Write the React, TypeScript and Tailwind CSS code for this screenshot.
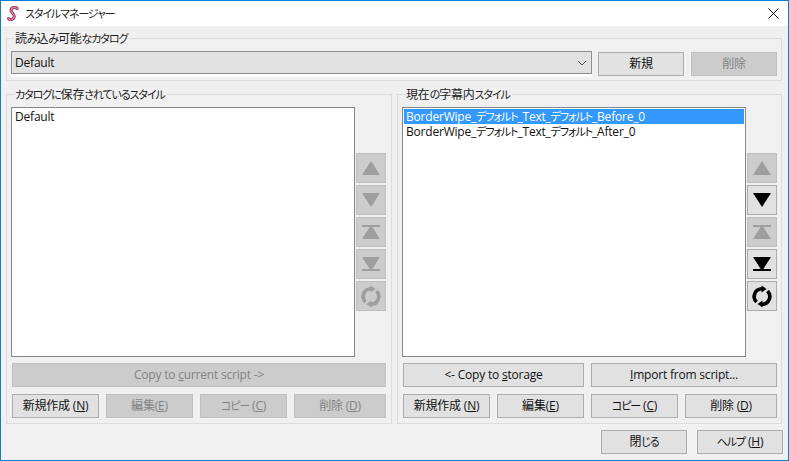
const font = "font-['Open_Sans','Noto_Sans_CJK_JP',sans-serif]";

function J({ t }: { t: string }) {
  const parts = t.split(/([\u3040-\u30ff]+)/);
  return (
    <>
      {parts.map((p, i) =>
        /[\u3040-\u30ff]/.test(p) ? (
          <span key={i} className="text-[11px] leading-none tracking-[-1.1px]">
            {p}
          </span>
        ) : (
          <span key={i}>{p}</span>
        ),
      )}
    </>
  );
}

function Btn({ children, off, w, h = 'h-[24px]' }: { children: React.ReactNode; off?: boolean; w: string; h?: string }) {
  return (
    <div
      className={`${w} ${h} shrink-0 flex items-center justify-center text-[12px] leading-none border ${
        off ? 'bg-[#cccccc] border-[#bfbfbf] text-[#838383]' : 'bg-[#e1e1e1] border-[#adadad] text-[#111111]'
      }`}
    >
      <span>{children}</span>
    </div>
  );
}

function Icon({ kind, off }: { kind: string; off?: boolean }) {
  const c = off ? '#9e9e9e' : '#000000';
  return (
    <div className={`w-[30px] h-[30px] border ${off ? 'bg-[#cccccc] border-[#bfbfbf]' : 'bg-[#e1e1e1] border-[#adadad]'}`}>
      <svg width="28" height="28" viewBox="1 1 28 28">
        {kind === 'up' && <path d="M15 8 L24 22 L6 22 Z" fill={c} />}
        {kind === 'down' && <path d="M6 8 L24 8 L15 22 Z" fill={c} />}
        {kind === 'top' && <path d="M6 8 H24 V10 H6 Z M15 8 L24 22 H6 Z" fill={c} />}
        {kind === 'bottom' && <path d="M6 8 H24 L15 22 Z M6 20 H24 V22 H6 Z" fill={c} />}
        {kind === 'sync' && (
          <g fill="none" stroke={c} strokeWidth="3.6">
            <path d="M9.5 21 A7.8 7.8 0 0 1 15 7.7" />
            <path d="M20.5 10 A7.8 7.8 0 0 1 15 23.3" />
            <path d="M14.5 4.5 L19.5 8 L14.5 11.5 Z" fill={c} stroke="none" />
            <path d="M15.5 19.5 L10.5 23 L15.5 26.5 Z" fill={c} stroke="none" />
          </g>
        )}
      </svg>
    </div>
  );
}

function Group({ title, className, children }: { title: string; className: string; children: React.ReactNode }) {
  return (
    <div className={`relative border border-[#dcdcdc] ${className}`}>
      <span className="absolute left-[8px] -top-[7px] bg-[#f0f0f0] pr-[2px] text-[12px] leading-[14px] text-[#222222]">
        <J t={title} />
      </span>
      {children}
    </div>
  );
}

function Arrows({ flags }: { flags: boolean[] }) {
  const kinds = ['up', 'down', 'top', 'bottom', 'sync'];
  return (
    <div className="mt-[46px] ml-px flex flex-col gap-[2px]">
      {kinds.map((k, i) => (
        <Icon key={k} kind={k} off={flags[i]} />
      ))}
    </div>
  );
}

export default function App() {
  return (
    <div className={`w-[789px] h-[461px] overflow-hidden border border-[#0a7fd6] bg-[#f0f0f0] ${font} [font-feature-settings:'palt'] tracking-[-0.2px] flex flex-col`}>
      <div className="h-[25px] shrink-0 bg-white flex items-center pl-[6px] pr-[9px]">
        <svg width="12" height="16" viewBox="6 6 12 16">
          <path d="M16 8.5 C14.5 6.5 10.5 7 10 10 C9.6 13 13.5 13.5 13.2 16.5 C13 19.5 9.5 20.5 7.5 18.5" fill="none" stroke="#8f2f55" strokeWidth="3" strokeLinecap="round" />
          <path d="M16 8.5 C14.5 6.5 10.5 7 10 10 C9.6 13 13.5 13.5 13.2 16.5 C13 19.5 9.5 20.5 7.5 18.5" fill="none" stroke="#ea7fa6" strokeWidth="1.3" strokeLinecap="round" />
        </svg>
        <span className="ml-[6px] text-[12px] text-[#222222]">
          <J t="スタイルマネージャー" />
        </span>
        <svg className="ml-auto" width="11" height="11" viewBox="0 0 11 11">
          <path d="M0.5 0.5 L10.5 10.5 M10.5 0.5 L0.5 10.5" stroke="#111111" strokeWidth="1" />
        </svg>
      </div>

      <div className="flex-1 px-[5px] pt-[12px]">
        <Group title="読み込み可能なカタログ" className="h-[43px] w-[776px] pl-[4px] pt-[12px]">
          <div className="flex">
            <div className="w-[581px] h-[26px] bg-white">
              <div className="h-[23px] border border-[#8f8f8f] bg-[#e1e1e1] flex items-center pl-[3px] pr-[4px] text-[12px] text-[#111111]">
                <span>Default</span>
                <svg className="ml-auto" width="10" height="6" viewBox="0 0 10 6">
                  <path d="M1 1 L5 5 L9 1" fill="none" stroke="#555555" strokeWidth="1" />
                </svg>
              </div>
            </div>
            <div className="ml-[6px] mt-px flex gap-[7px]">
              <Btn w="w-[86px]">新規</Btn>
              <Btn w="w-[86px]" off>削除</Btn>
            </div>
          </div>
        </Group>

        <div className="mt-[13px] flex gap-[5px]">
          <Group title="カタログに保存されているスタイル" className="w-[386px] h-[330px] pl-[4px] pt-[12px]">
            <div className="flex">
              <div className="w-[344px] h-[250px] bg-white border border-[#828790] px-[3px] py-px text-[12px] leading-[16px] text-[#111111]">
                Default
              </div>
              <Arrows flags={[true, true, true, true, true]} />
            </div>
            <div className="ml-px mt-[6px]">
              <Btn w="w-[374px]" off>
                Copy to <u>c</u>urrent script -&gt;
              </Btn>
            </div>
            <div className="ml-px mt-[7px] flex gap-[7px]">
              <Btn w="w-[87px]">新規作成 (<u>N</u>)</Btn>
              <Btn w="w-[87px]" off>編集(<u>E</u>)</Btn>
              <Btn w="w-[87px]" off><J t="コピー" /> (<u>C</u>)</Btn>
              <Btn w="w-[92px]" off>削除 (<u>D</u>)</Btn>
            </div>
          </Group>

          <Group title="現在の字幕内スタイル" className="w-[385px] h-[330px] pl-[4px] pt-[12px]">
            <div className="flex">
              <div className="w-[344px] h-[250px] bg-white border border-[#828790] px-px py-px text-[12px] text-[#111111]">
                <div className="h-[15px] leading-[15px] bg-[#3399ff] text-white pl-[2px] whitespace-nowrap">
                  <J t="BorderWipe_デフォルト_Text_デフォルト_Before_0" />
                </div>
                <div className="h-[15px] leading-[15px] pl-[2px] whitespace-nowrap">
                  <J t="BorderWipe_デフォルト_Text_デフォルト_After_0" />
                </div>
              </div>
              <Arrows flags={[true, false, true, false, false]} />
            </div>
            <div className="ml-px mt-[6px] flex gap-[7px]">
              <Btn w="w-[181px]">
                &lt;- Copy to <u>s</u>torage
              </Btn>
              <Btn w="w-[186px]">
                <u>I</u>mport from script...
              </Btn>
            </div>
            <div className="ml-px mt-[7px] flex gap-[7px]">
              <Btn w="w-[87px]">新規作成 (<u>N</u>)</Btn>
              <Btn w="w-[87px]">編集(<u>E</u>)</Btn>
              <Btn w="w-[87px]"><J t="コピー" /> (<u>C</u>)</Btn>
              <Btn w="w-[92px]">削除 (<u>D</u>)</Btn>
            </div>
          </Group>
        </div>

        <div className="mt-[6px] flex justify-end gap-[10px]">
          <Btn w="w-[86px]"><J t="閉じる" /></Btn>
          <Btn w="w-[86px]"><J t="ヘルプ" /> (<u>H</u>)</Btn>
        </div>
      </div>
    </div>
  );
}
